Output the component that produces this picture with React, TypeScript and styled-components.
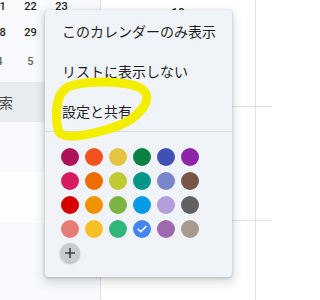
import React from 'react';
import styled, { createGlobalStyle } from 'styled-components';

const GlobalStyle = createGlobalStyle`
  html, body {
    margin: 0;
    padding: 0;
    background: #ffffff;
  }
  body {
    font-family: "Noto Sans CJK JP", Roboto, "Noto Sans", sans-serif;
  }
`;

const Page = styled.div`
  position: relative;
  width: 272px;
  height: 300px;
  overflow: hidden;
  display: flex;
  background: #ffffff;
`;

const Sidebar = styled.aside`
  width: 100px;
  flex-shrink: 0;
  background: #f8fafd;
  border-right: 1px solid #dde3ea;
  overflow: hidden;
  display: flex;
  flex-direction: column;
`;

const MiniCal = styled.div`
  display: grid;
  grid-template-columns: repeat(3, 31px);
  grid-template-rows: 26px 27px 30px;
  margin: -7px 0 0 -16px;
`;

const Day = styled.span<{ $muted?: boolean }>`
  display: flex;
  align-items: center;
  justify-content: center;
  font-family: Roboto, "Noto Sans", sans-serif;
  font-size: 11px;
  font-weight: 500;
  color: ${({ $muted }) => ($muted ? '#5f6368' : '#1f1f1f')};
`;

const SearchRow = styled.div`
  margin-top: 6px;
  height: 40px;
  background: #e9edf2;
  display: flex;
  align-items: center;
  font-size: 14px;
  color: #444746;
  white-space: nowrap;

  span {
    margin-left: -15px;
  }
`;

const WhiteBand = styled.div`
  margin-top: 50px;
  height: 51px;
  background: #fdfeff;
`;

const CalendarGrid = styled.div`
  flex: 1;
  display: grid;
  grid-template-columns: 155px 1fr;
  grid-template-rows: 107px 114px 1fr;
`;

const Cell = styled.div<{ $last?: boolean }>`
  border-right: ${({ $last }) => ($last ? 'none' : '1px solid #dde3ea')};
  border-bottom: 1px solid #dde3ea;
  display: flex;
  justify-content: center;
  align-items: flex-start;

  &:nth-last-child(-n + 2) {
    border-bottom: none;
  }
`;

const DateNum = styled.span`
  margin-top: 6px;
  font-family: Roboto, "Noto Sans", sans-serif;
  font-size: 12px;
  font-weight: 500;
  color: #1f1f1f;
`;

const Menu = styled.div`
  position: absolute;
  left: 45px;
  top: 10px;
  width: 187px;
  height: 267px;
  box-sizing: border-box;
  padding-top: 1px;
  background: #f0f4f9;
  border-radius: 4px;
  box-shadow: 0 1px 3px rgba(60, 64, 67, 0.3), 0 4px 8px 3px rgba(60, 64, 67, 0.15);
`;

const MenuItem = styled.div`
  height: 40px;
  padding-left: 17px;
  display: flex;
  align-items: center;
  font-size: 14px;
  color: #1f1f1f;
  white-space: nowrap;
`;

const Divider = styled.div`
  height: 1px;
  background: #dadde2;
`;

const Swatches = styled.div`
  display: grid;
  grid-template-columns: repeat(6, 18px);
  grid-auto-rows: 18px;
  gap: 6px;
  padding: 16px 0 0 16px;
`;

const Swatch = styled.div<{ $color: string }>`
  width: 18px;
  height: 18px;
  border-radius: 50%;
  background: ${({ $color }) => $color};
  display: flex;
  align-items: center;
  justify-content: center;
`;

const AddButton = styled.div`
  margin: 5px 0 0 15px;
  width: 20px;
  height: 20px;
  border-radius: 50%;
  background: #c9cbcd;
  box-shadow: 0 1px 2px rgba(60, 64, 67, 0.35);
  display: flex;
  align-items: center;
  justify-content: center;
`;

const Highlight = styled.svg`
  position: absolute;
  left: 0;
  top: 0;
  pointer-events: none;
`;

const palette = [
  '#ad1457', '#f4511e', '#e4c441', '#0b8043', '#3f51b5', '#8e24aa',
  '#d81b60', '#ef6c00', '#c0ca33', '#009688', '#7986cb', '#795548',
  '#d50000', '#f09300', '#7cb342', '#039be5', '#b39ddb', '#616161',
  '#e67c73', '#f6bf26', '#33b679', '#4285f4', '#9e69af', '#a79b8e',
];

const selected = '#4285f4';

const App: React.FC = () => {
  return (
    <>
      <GlobalStyle />
      <Page>
        <Sidebar>
          <MiniCal>
            <Day>21</Day>
            <Day>22</Day>
            <Day>23</Day>
            <Day>28</Day>
            <Day>29</Day>
            <Day>30</Day>
            <Day $muted>4</Day>
            <Day $muted>5</Day>
            <Day $muted>6</Day>
          </MiniCal>
          <SearchRow>
            <span>検索</span>
          </SearchRow>
          <WhiteBand />
        </Sidebar>

        <CalendarGrid>
          <Cell>
            <DateNum>19</DateNum>
          </Cell>
          <Cell $last />
          <Cell />
          <Cell $last />
          <Cell />
          <Cell $last />
        </CalendarGrid>

        <Menu>
          <MenuItem>このカレンダーのみ表示</MenuItem>
          <MenuItem>リストに表示しない</MenuItem>
          <MenuItem>設定と共有</MenuItem>
          <Divider />
          <Swatches>
            {palette.map((c) => (
              <Swatch key={c} $color={c}>
                {c === selected && (
                  <svg width="12" height="12" viewBox="0 0 24 24">
                    <path
                      d="M4.5 12.5l5 5L20 7"
                      fill="none"
                      stroke="#ffffff"
                      strokeWidth="3.4"
                      strokeLinecap="round"
                      strokeLinejoin="round"
                    />
                  </svg>
                )}
              </Swatch>
            ))}
          </Swatches>
          <AddButton>
            <svg width="12" height="12" viewBox="0 0 12 12">
              <path d="M6 1v10M1 6h10" stroke="#3c4043" strokeWidth="1.6" />
            </svg>
          </AddButton>
        </Menu>

        <Highlight width="272" height="300" viewBox="0 0 272 300">
          <path
            d="M138 113 C146 106, 151 96, 142 89 C130 81, 92 80, 70 86 C55 92, 55 115, 58 130 C61 140, 85 136, 105 130 C120 126, 132 120, 138 113"
            fill="none"
            stroke="#f3ee00"
            strokeWidth="9"
            strokeLinecap="round"
            strokeLinejoin="round"
          />
        </Highlight>
      </Page>
    </>
  );
};

export default App;
